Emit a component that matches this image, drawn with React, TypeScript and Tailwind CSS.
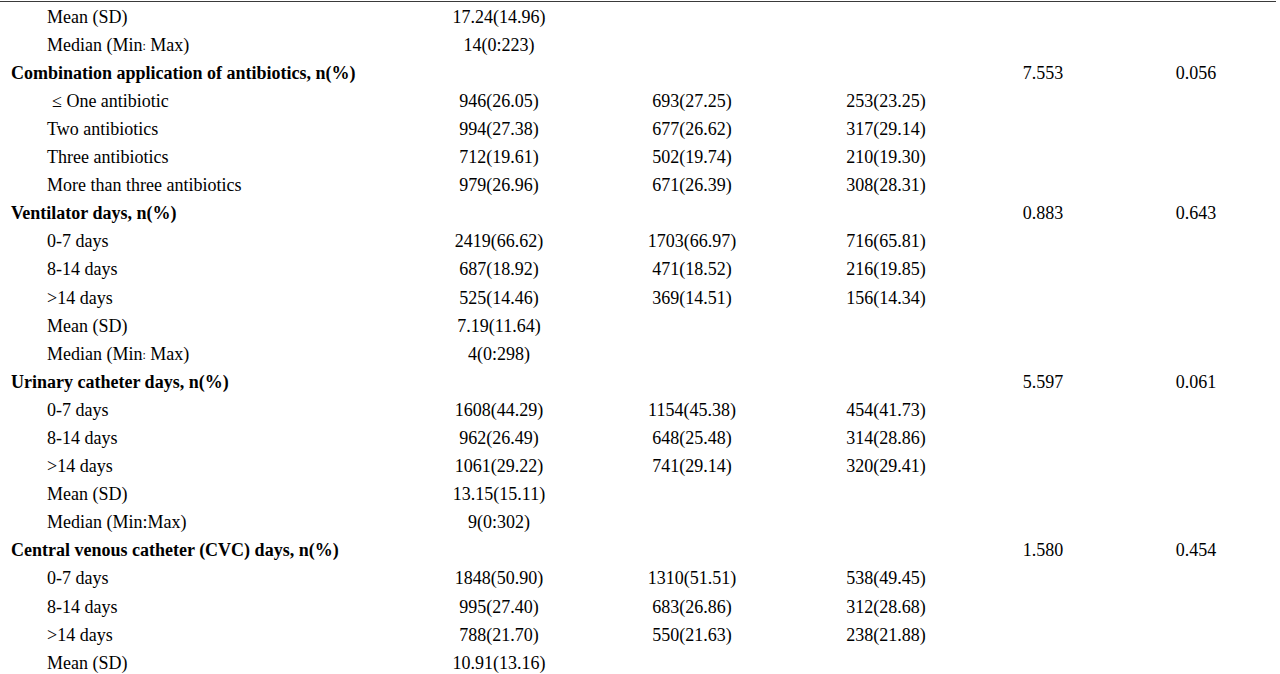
import React from "react";

type Row = {
  label: React.ReactNode;
  bold?: boolean;
  indent?: "sub" | "le";
  c?: [string?, string?, string?, string?, string?];
};

const SmallColonMedian = () => (
  <span>
    Median (Min<span className="text-[12px] relative -top-[1px]">:</span> Max)
  </span>
);

const rows: Row[] = [
  { label: "Mean (SD)", c: ["17.24(14.96)"] },
  { label: <SmallColonMedian />, c: ["14(0:223)"] },
  { label: "Combination application of antibiotics, n(%)", bold: true, c: ["", "", "", "7.553", "0.056"] },
  { label: "≤ One antibiotic", indent: "le", c: ["946(26.05)", "693(27.25)", "253(23.25)"] },
  { label: "Two antibiotics", c: ["994(27.38)", "677(26.62)", "317(29.14)"] },
  { label: "Three antibiotics", c: ["712(19.61)", "502(19.74)", "210(19.30)"] },
  { label: "More than three antibiotics", c: ["979(26.96)", "671(26.39)", "308(28.31)"] },
  { label: "Ventilator days, n(%)", bold: true, c: ["", "", "", "0.883", "0.643"] },
  { label: "0-7 days", c: ["2419(66.62)", "1703(66.97)", "716(65.81)"] },
  { label: "8-14 days", c: ["687(18.92)", "471(18.52)", "216(19.85)"] },
  { label: ">14 days", c: ["525(14.46)", "369(14.51)", "156(14.34)"] },
  { label: "Mean (SD)", c: ["7.19(11.64)"] },
  { label: <SmallColonMedian />, c: ["4(0:298)"] },
  { label: "Urinary catheter days, n(%)", bold: true, c: ["", "", "", "5.597", "0.061"] },
  { label: "0-7 days", c: ["1608(44.29)", "1154(45.38)", "454(41.73)"] },
  { label: "8-14 days", c: ["962(26.49)", "648(25.48)", "314(28.86)"] },
  { label: ">14 days", c: ["1061(29.22)", "741(29.14)", "320(29.41)"] },
  { label: "Mean (SD)", c: ["13.15(15.11)"] },
  { label: "Median (Min:Max)", c: ["9(0:302)"] },
  { label: "Central venous catheter (CVC) days, n(%)", bold: true, c: ["", "", "", "1.580", "0.454"] },
  { label: "0-7 days", c: ["1848(50.90)", "1310(51.51)", "538(49.45)"] },
  { label: "8-14 days", c: ["995(27.40)", "683(26.86)", "312(28.68)"] },
  { label: ">14 days", c: ["788(21.70)", "550(21.63)", "238(21.88)"] },
  { label: "Mean (SD)", c: ["10.91(13.16)"] },
];

export default function App() {
  return (
    <div
      className="w-[1280px] h-[674px] overflow-hidden bg-white text-black"
      style={{ fontFamily: '"Liberation Serif", "Times New Roman", serif' }}
    >
      <div className="mt-[1px] h-[1px] w-[1276px] bg-[#3a3a3a]" />
      <div className="pt-[0.6px] text-[18px] leading-[28.1px]">
        {rows.map((r, i) => {
          const c = r.c ?? [];
          return (
            <div key={i} className="grid h-[28.1px] grid-cols-[403px_192px_194px_194px_120px_177px] whitespace-nowrap">
              <div
                className={
                  r.bold
                    ? "pl-[11px] font-bold"
                    : r.indent === "le"
                    ? "pl-[52px]"
                    : "pl-[47px]"
                }
              >
                {r.label}
              </div>
              <div className="text-center">{c[0] ?? ""}</div>
              <div className="text-center">{c[1] ?? ""}</div>
              <div className="text-center">{c[2] ?? ""}</div>
              <div className="text-center">{c[3] ?? ""}</div>
              <div className="pl-[9px] text-center">{c[4] ?? ""}</div>
            </div>
          );
        })}
      </div>
    </div>
  );
}
